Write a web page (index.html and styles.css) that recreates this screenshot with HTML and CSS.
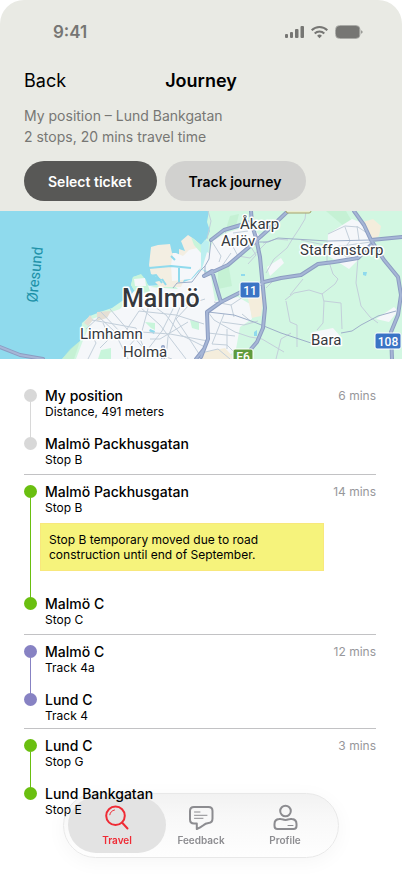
FILE: index.html
```html
<!DOCTYPE html>
<html lang="en">
<head>
  <meta charset="UTF-8">
  <meta name="viewport" content="width=device-width, initial-scale=1">
  <title>Journey</title>
  <link rel="stylesheet" href="styles.css">
</head>
<body>

<header class="header">
  <div class="status-bar">
    <span>9:41</span>
    <svg width="80" height="16" viewBox="0 0 80 16" fill="#767673" aria-hidden="true">
      <rect x="1" y="10" width="3" height="4" rx="1"/>
      <rect x="6" y="8" width="3" height="6" rx="1"/>
      <rect x="11" y="5" width="3.500" height="9" rx="1"/>
      <rect x="16.500" y="2" width="3.500" height="12" rx="1"/>
      <g fill="none" stroke="#767673" stroke-width="2">
        <path d="M27.700 6.300a11 11 0 0 1 15.600 0"/>
        <path d="M30.700 9.500a6.800 6.800 0 0 1 9.600 0"/>
      </g>
      <path d="M35.500 14.200l-2.400-2.500a3.500 3.500 0 0 1 4.800 0z"/>
      <rect x="51.500" y="1.500" width="24.500" height="13" rx="4" fill="none" stroke="#a9aaa6"/>
      <rect x="52" y="2" width="23.500" height="12" rx="3.500"/>
      <path d="M77.300 6.300c1.600.5 1.600 3 0 3.500z"/>
    </svg>
  </div>

  <div class="title-bar">
    <a class="back" href="#">Back</a>
    <h1>Journey</h1>
  </div>

  <p class="summary">My position – Lund Bankgatan<br>2 stops, 20 mins travel time</p>

  <div class="actions">
    <button class="btn btn-dark" type="button">Select ticket</button>
    <button class="btn btn-light" type="button">Track journey</button>
  </div>
</header>

<svg class="map" viewBox="0 0 402 148" preserveAspectRatio="xMidYMid slice" role="img" aria-label="Map of Malmö">
  <rect width="402" height="148" fill="#8fdaed"/>

  <!-- land -->
  <path fill="#d2f7e2" d="M209 0L207 11L210 20L207 27L201 34L204 60L180 80L150 76L140 64L133 66L131 74L137 84L122 90L112 97L100 101L90 105L82 112L80 130L71 138L62 148H402V0Z"/>
  <path fill="#bdeccb" d="M218 54l10-3 4 24-14 3z M230 5l9-2-3 12-10 3z M80 130l-10 8-8 10h12z M326 0h20l8 14-8 3z" opacity=".6"/>
  <path fill="#bdeff0" d="M201 34l4-5 4 2-2 30-6 2z"/>

  <!-- built-up areas -->
  <g fill="#f5f7fa">
    <path d="M92 108L120 98L134 80L140 75L175 74L192 68L201 58L211 66L215 90L238 86L250 93L252 108L240 116L236 138L226 148H76L82 132Z"/>
    <path d="M213 30L226 22L251 14L262 28L247 39L230 53L210 62L206 50Z"/>
    <path d="M328 23L352 8L365 13L371 31L360 47L349 58L338 51L327 44Z"/>
    <path d="M313 121l20-4 8 9-10 10-20-2z M376 108l18-12 4 4-9 11z M267 56l14-9 3 5-14 13z M207 41l12 8-9 12-8-3z"/>
  </g>
  <path fill="#f4eddc" d="M363 11l10-3 8 7-2 10-8 5z M246 78l10-5 8 10-3 22-9 2z M205 141l20-4 10 11h-34z"/>
  <path fill="#c8f5db" d="M145 111l10 1v7l-4-2z M101 139l10-2v11h-13z M150 76l20-5 8 7z M190 109l9 2v8l-7-2z"/>

  <!-- harbour -->
  <path fill="#f3eee2" d="M151 36L158 34L170 33L172 42L179 44L179 38L185 40L181 30L188 24L194 28L201 34V58L186 64L181 76H160L155 71L163 69L151 63L149 54Z"/>
  <path fill="#f5f7fa" d="M176 42l7 3 6-6 12-3v20l-10 12-19 2-1-16 2-12z"/>
  <path fill="#c8f5db" d="M133 66l8-3 5 6 4 11-13 4-6-10z M191 26l10 8v8l-7-8z"/>
  <path fill="#f5f7fa" d="M134 68l11-1 1 8h-11z"/>
  <path fill="#e5dfd4" d="M97 101l14-1-4 7-10 3z M84 112l6-8 3 5-5 6z"/>
  <path fill="none" stroke="#8fdaed" stroke-width="2" d="M149 57l22-2 20 2M179 57v14M150 65l6-1 6 8M171 45l4 4M166 74l-4-6"/>
  <path fill="#8fdaed" d="M150 118l5 2-1 3-5-3z M363 61l4 0-1 4-3-1z M241 63h4v2h-4z M254 121l3-2v6h-3z"/>

  <!-- small roads -->
  <g class="road-small">
    <path d="M86 118L99 106L114 120L128 148M92 109L136 117L148 148M110 98L145 139L172 148M101 101L123 124L139 100L176 104L204 113M84 128L126 120L170 123L208 130M140 96L160 114L186 148M176 92L162 120L148 138M149 94L142 120L130 134M190 93L176 108L192 132L201 146M205 88L180 96L168 126L166 148M90 121L96 132L88 148M155 96L166 104L181 124L205 136M103 112L110 127L100 137M150 128L160 128L188 111"/>
    <path d="M207 28L211 10L208 0M211 29L221 45L219 51M224 19L238 45L250 47L260 38L267 31M244 25L256 44L248 53M233 22L248 20M231 42L220 58L204 65"/>
    <path d="M306 0L305 8L299 18L293 27L287 37L274 48L266 62M263 32L276 28L288 29M301 29L334 36L371 31M327 31V50M328 23L345 15L358 16L370 24M345 16L350 30L344 38M357 15L359 29M331 36L347 46L367 37"/>
    <path d="M285 89L294 82L309 79L322 83L335 73L338 68L333 63L329 51M286 90L290 111L297 114V136M290 84L303 68M322 82L324 91L323 112L317 119M358 47L356 72L361 95L370 106L378 112M324 90L341 92L342 118M276 67L266 77M276 148L281 128L291 122"/>
    <path d="M208 101L214 109L235 121L250 126L262 128L284 141M214 91L231 94L234 106M224 103L212 133L227 134L239 146M222 111L244 114L258 110M227 118V138M208 122L235 125M242 103L253 112M201 142L218 138L230 148M231 94L246 84"/>
  </g>

  <!-- regional roads -->
  <g class="road-mid">
    <path d="M208 101L234 104L254 111L281 122L311 132M341 122L352 120L361 114L378 105L396 100M256 31L268 31L278 27L294 28L328 30L371 29M205 64V55L209 48L211 29M173 77L177 72L192 71L201 59L205 55"/>
  </g>

  <!-- motorways -->
  <g class="road-main">
    <path id="motorways" d="M251 0L252 14L256 27L260 46L262 67L265 97L263 117L257 131L251 138M201 146L208 128L207 101L221 91L241 81L264 71L281 67L301 64L318 53L334 51L358 47L371 34M371 29L402 26M204 65L228 54L248 37L268 19L288 0M204 65L212 60L214 67L218 81L221 91M211 29L224 19L251 11M354 0L364 14L371 29L384 49L398 66L401 84L398 104L391 121L392 148M0 136L20 144L43 148M163 136V148M196 148L204 138"/>
  </g>
  <use href="#motorways" class="road-core"/>

  <path fill="#e9edcf" stroke="#a4a16b" d="M286 -2h25v2q0 2-2 2h-21q-2 0-2-2z"/>

  <!-- place names -->
  <g class="places">
    <text class="place-big" x="122" y="96">Malmö</text>
    <text x="80" y="128">Limhamn</text>
    <text x="123" y="146">Holma</text>
    <text x="240" y="18">Åkarp</text>
    <text x="221" y="35">Arlöv</text>
    <text x="300" y="44">Staffanstorp</text>
    <text x="311" y="134">Bara</text>
  </g>
  <text class="place-sea" transform="translate(37 92) rotate(-84)">Øresund</text>

  <!-- road shields -->
  <g stroke="#fff">
    <rect x="240" y="71" width="20" height="16" rx="2" fill="#3a74c5"/>
    <rect x="375" y="122" width="26" height="16" rx="2" fill="#3a74c5"/>
    <rect x="233" y="138" width="20" height="16" rx="2" fill="#5f9b3c"/>
  </g>
  <g class="shields">
    <text x="250" y="84">11</text>
    <text x="388" y="135">108</text>
    <text x="243" y="150">E6</text>
  </g>
</svg>

<main class="legs">
  <section class="leg leg-walk">
    <ol class="stops">
      <li class="stop">
        <div class="stop-text">
          <h2>My position</h2>
          <p>Distance, 491 meters</p>
        </div>
      </li>
      <li class="stop">
        <div class="stop-text">
          <h2>Malmö Packhusgatan</h2>
          <p>Stop B</p>
        </div>
      </li>
    </ol>
    <span class="time">6 mins</span>
  </section>

  <section class="leg leg-bus">
    <ol class="stops">
      <li class="stop stop-notice">
        <div class="stop-text">
          <h2>Malmö Packhusgatan</h2>
          <p>Stop B</p>
          <p class="notice">Stop B temporary moved due to road construction until end of September.</p>
        </div>
      </li>
      <li class="stop">
        <div class="stop-text">
          <h2>Malmö C</h2>
          <p>Stop C</p>
        </div>
      </li>
    </ol>
    <span class="time">14 mins</span>
  </section>

  <section class="leg leg-train">
    <ol class="stops">
      <li class="stop">
        <div class="stop-text">
          <h2>Malmö C</h2>
          <p>Track 4a</p>
        </div>
      </li>
      <li class="stop">
        <div class="stop-text">
          <h2>Lund C</h2>
          <p>Track 4</p>
        </div>
      </li>
    </ol>
    <span class="time">12 mins</span>
  </section>

  <section class="leg leg-bus">
    <ol class="stops">
      <li class="stop">
        <div class="stop-text">
          <h2>Lund C</h2>
          <p>Stop G</p>
        </div>
      </li>
      <li class="stop">
        <div class="stop-text">
          <h2>Lund Bankgatan</h2>
          <p>Stop E</p>
        </div>
      </li>
    </ol>
    <span class="time">3 mins</span>
  </section>
</main>

<nav class="tab-bar">
  <a class="tab active" href="#">
    <svg width="28" height="28" viewBox="0 0 28 28" fill="none" stroke="currentColor" stroke-width="2" stroke-linecap="round" aria-hidden="true">
      <circle cx="12.500" cy="11.800" r="9.300"/>
      <path d="M19 18.500l5.500 6"/>
      <path d="M6.800 10.800c.5-2.600 2-4.200 4.700-4.800" stroke-width="1"/>
    </svg>
    Travel
  </a>
  <a class="tab" href="#">
    <svg width="28" height="28" viewBox="0 0 28 28" fill="none" stroke="currentColor" stroke-width="2" stroke-linecap="round" stroke-linejoin="round" aria-hidden="true">
      <path d="M7 3H21.500Q25.500 3 25.500 7V14.500Q25.500 18.700 21.500 19Q18.500 19.200 16 21.500Q13.500 23.500 9.800 25V19.500H7Q3 19.500 3 15.500V7Q3 3 7 3Z"/>
      <path d="M7.500 8h5.500M7.500 11.300H20M7.500 14.300h8.500" stroke-width="1"/>
    </svg>
    Feedback
  </a>
  <a class="tab" href="#">
    <svg width="28" height="28" viewBox="0 0 28 28" fill="none" stroke="currentColor" stroke-width="2" stroke-linecap="round" stroke-linejoin="round" aria-hidden="true">
      <circle cx="14.500" cy="7" r="5.300"/>
      <path d="M8 15Q10 14.700 11.300 15.300Q14.500 16.500 17.700 15.300Q19 14.700 21 15Q25.500 15.500 25.500 20V22Q25.500 25 22.500 25H6.500Q3.500 25 3.500 22V20Q3.500 15.500 8 15Z"/>
      <path d="M17 21.500h5" stroke-width="1"/>
    </svg>
    Profile
  </a>
</nav>

</body>
</html>
```

FILE: styles.css
```css
* {
  box-sizing: border-box;
}

html {
  background: #fff;
}

body {
  margin: 0;
  min-height: 100vh;
  color: #000;
  font-family: Inter, "Liberation Sans", sans-serif;
  font-size: 14px;
}

h1, h2, p, ol {
  margin: 0;
  padding: 0;
}

a {
  color: inherit;
  text-decoration: none;
}

/* header */

.header {
  background: #e9eae4;
  border-radius: 24px 24px 0 0;
  padding: 20px 24px 10px;
}

.status-bar {
  display: flex;
  justify-content: space-between;
  align-items: center;
  height: 24px;
  padding: 0 14px 0 29px;
  color: #767673;
  font-size: 17px;
  font-weight: 600;
}

.title-bar {
  display: grid;
  grid-template-columns: 1fr auto 1fr;
  align-items: center;
  margin-top: 25px;
  line-height: 24px;
}

.back {
  font-size: 18px;
}

.title-bar h1 {
  font-size: 18px;
  font-weight: 600;
}

.summary {
  margin-top: 12px;
  color: #777774;
  font-size: 14px;
  line-height: 21px;
}

.actions {
  display: flex;
  gap: 8px;
  margin-top: 14px;
}

.btn {
  height: 40px;
  padding: 0 25px 0 24px;
  border: none;
  border-radius: 20px;
  font: inherit;
  font-weight: 600;
}

.btn-dark {
  background: #585856;
  color: #fff;
}

.btn-light {
  background: #d1d1cf;
  color: #000;
}

/* map */

.map {
  display: block;
  width: 100%;
  height: 148px;
  font-family: Roboto, "Liberation Sans", sans-serif;
}

.road-small {
  fill: none;
  stroke: #c3cfda;
  stroke-width: 1;
}

.road-mid {
  fill: none;
  stroke: #9eafc9;
  stroke-width: 1;
}

.road-main {
  fill: none;
  stroke: #8c9dc2;
  stroke-width: 4;
  stroke-linejoin: round;
}

.road-core {
  stroke: #a6b6d6;
  stroke-width: 2;
  fill: none;
}

/* the copy inherits from its own group, so the core is set on the path */
.road-core,
.road-main {
  stroke-linecap: round;
}

.places {
  fill: #35383d;
  font-size: 15px;
  stroke: #fff;
  stroke-width: 3px;
  stroke-linejoin: round;
  paint-order: stroke;
}

.place-big {
  font-size: 25px;
  font-weight: 500;
}

.place-sea {
  fill: #1d91a8;
  font-size: 15px;
}

.shields {
  fill: #fff;
  font-size: 12px;
  font-weight: 500;
  text-anchor: middle;
}

/* journey legs */

.legs {
  padding: 20px 26px 48px 24px;
}

.leg {
  display: flex;
  justify-content: space-between;
  padding: 8px 0 7px;
  border-bottom: 1px solid #c2c2c4;
}

.leg-train {
  padding-bottom: 5px;
}

.leg:last-child {
  border-bottom: none;
}

.leg-walk {
  --line: #d8d8d8;
}

.leg-bus {
  --line: #6abf10;
}

.leg-train {
  --line: #8782c3;
}

.stops {
  list-style: none;
}

.stop {
  display: grid;
  grid-template-columns: 13px 1fr;
  grid-template-rows: 15px 1fr;
  column-gap: 8px;
}

.stop::before {
  content: "";
  width: 13px;
  height: 13px;
  margin-top: 2px;
  border-radius: 50%;
  background: var(--line);
}

/* line down to the next stop */
.stop:not(:last-child)::after {
  content: "";
  grid-column: 1;
  grid-row: 2;
  justify-self: center;
  width: 1px;
  margin-bottom: -3px;
  background: var(--line);
}

.stop-text {
  grid-column: 2;
  grid-row: 1 / 3;
}

.stop:not(:last-child) .stop-text {
  padding-bottom: 16px;
}

.stop-notice:not(:last-child) .stop-text {
  padding-bottom: 24px;
}

.stop h2 {
  font-size: 14px;
  font-weight: 500;
  line-height: 18px;
}

.stop p {
  font-size: 12px;
  line-height: 14px;
}

.stop .notice {
  max-width: 284px;
  margin: 8px 0 0 -5px;
  padding: 8px;
  border: 1px solid #f8e87c;
  background: #f6f37c;
  line-height: 15px;
}

.time {
  flex: none;
  color: #97979b;
  font-size: 12px;
  line-height: 18px;
}

/* floating tab bar, multiplied so the list stays readable beneath it */

.tab-bar {
  position: fixed;
  bottom: 16px;
  left: 50%;
  display: flex;
  padding: 0 11px;
  border: 1px solid #e8e8e8;
  border-radius: 33px;
  background: linear-gradient(#f2f2f2, #f8f8f8 35%, #fefefe);
  box-shadow: 0 4px 20px rgba(0, 0, 0, 0.04);
  mix-blend-mode: multiply;
  transform: translateX(-50%);
}

.tab {
  position: relative;
  display: flex;
  flex-direction: column;
  align-items: center;
  gap: 2px;
  width: 84px;
  padding: 10px 0 11px;
  color: #8c8c90;
  font-size: 10px;
  font-weight: 600;
  line-height: 12px;
}

.tab.active {
  color: #ef2b35;
}

.tab.active::before {
  content: "";
  position: absolute;
  z-index: -1;
  inset: 3px -7px 4px;
  border-radius: 28px;
  background: #e3e3e3;
}
```
